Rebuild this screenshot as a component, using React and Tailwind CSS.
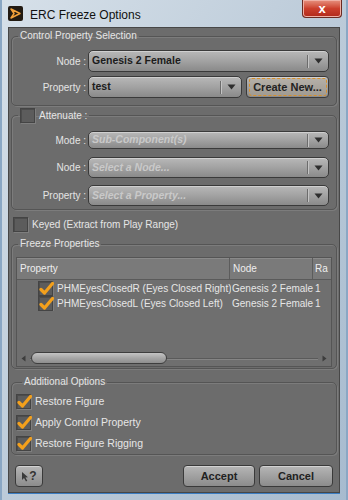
import React from "react";

const font = "font-['Liberation_Sans',Arial,sans-serif]";

function Arrow() {
  return (
    <svg width="9" height="6" viewBox="0 0 9 6">
      <path d="M0.5 0.5 L8.5 0.5 L4.5 5.5 Z" fill="#2e2e2e" />
    </svg>
  );
}

function Combo({ text, disabled, height }) {
  return (
    <div
      className={`flex items-center ${height} rounded-[5px] border border-[#3a3a3a] bg-linear-to-b from-[#b8b8b8] via-[#a2a2a2] to-[#8a8a8a] shadow-[inset_0_1px_0_#d0d0d0]`}
    >
      {disabled ? (
        <span className="flex-1 truncate pl-[3px] text-[10.5px] font-bold italic text-[#c9c9c9]">
          {text}
        </span>
      ) : (
        <span className="flex-1 truncate pl-[3px] text-[10.5px] font-bold text-[#1c1c1c]">
          {text}
        </span>
      )}
      <span className="h-[13px] w-px bg-[#6c6c6c] shadow-[1px_0_0_#c4c4c4]"></span>
      <span className="flex w-[20px] justify-center">
        <Arrow />
      </span>
    </div>
  );
}

function Check({ checked }) {
  return (
    <span className="relative flex h-[15px] w-[15px] shrink-0 items-center justify-center border border-[#444444] bg-[#5c5c5c] shadow-[inset_1px_1px_0_#4c4c4c,1px_1px_0_#7e7e7e]">
      {checked && (
        <svg width="15" height="15" viewBox="0 0 15 15" className="absolute left-[0px] top-[-1px]">
          <path
            d="M2 8.5 L5.5 12 L13.5 2.5"
            fill="none"
            stroke="#f3a01c"
            strokeWidth="3.2"
            strokeLinecap="round"
            strokeLinejoin="round"
          />
        </svg>
      )}
    </span>
  );
}

function Button({ children, width, focus }) {
  return (
    <div
      className={`flex h-[22px] ${width} items-center justify-center rounded-[4px] border border-[#3a3a3a] bg-linear-to-b from-[#b6b6b6] to-[#8c8c8c] shadow-[inset_0_1px_0_#d2d2d2] text-[11px] font-bold text-[#222222]`}
    >
      {focus ? (
        <span className="flex h-[18px] w-[78px] items-center justify-center rounded-[3px] border border-dashed border-[#d9902a] bg-[#b9ad98]/40">
          {children}
        </span>
      ) : (
        children
      )}
    </div>
  );
}

function Row({ label, children }) {
  return (
    <div className="flex items-center">
      <span className="w-[75px] pr-[1px] text-right text-[10px] text-[#e4e4e4]">{label}</span>
      <div className="ml-[1px] flex flex-1 gap-[4px]">{children}</div>
    </div>
  );
}

function Group({ legend, className, children }) {
  return (
    <fieldset
      className={`rounded-[5px] border border-[#555555] shadow-[inset_1px_1px_0_#7c7c7c,1px_1px_0_#7c7c7c] ${className}`}
    >
      <legend className="ml-[6px] px-[2px] text-[10px] leading-[12px] text-[#e6e6e6]">{legend}</legend>
      {children}
    </fieldset>
  );
}

function App() {
  return (
    <div
      className={`flex h-[500px] w-[348px] flex-col overflow-hidden border-l-2 border-r-2 border-[#8aa7c4] bg-linear-to-br from-[#d6e0e9] via-[#bccbd9] to-[#a7bbcf] ${font}`}
    >
      {/* title bar */}
      <div className="flex h-[27px] items-start">
        <div className="ml-[6px] mt-[6px] flex h-[15px] w-[15px] items-center justify-center rounded-[2px] bg-[#221a12]">
          <svg width="13" height="13" viewBox="0 0 13 13">
            <path d="M2 2 L11 6.5 L2 11 L5 6.5 Z" fill="none" stroke="#f3a13a" strokeWidth="1.5" strokeLinejoin="round" />
          </svg>
        </div>
        <span className="ml-[7px] mt-[6px] text-[12px] text-[#101010]">ERC Freeze Options</span>
        <div className="ml-auto mr-[4px] flex h-[18px] w-[40px] items-center justify-center rounded-b-[4px] border border-t-0 border-[#6b2a22] bg-linear-to-b from-[#e6907f] via-[#cc3f2c] to-[#b0281a] shadow-[inset_0_0_0_1px_#f0b0a5]">
          <span className="text-[13px] font-bold leading-none text-white">x</span>
        </div>
      </div>

      {/* client */}
      <div className="mx-[6px] mb-[7px] flex flex-1 flex-col border border-[#474747] bg-[#6c6c6c] px-[2px] text-[10px] text-[#e6e6e6] shadow-[0_1px_0_#3b7dc2]">
        <Group legend="Control Property Selection" className="mt-[2px] pb-[7px] pr-[7px] pt-[8px]">
          <div className="flex flex-col gap-[4px]">
            <Row label="Node :">
              <div className="flex-1">
                <Combo text="Genesis 2 Female" height="h-[22px]" />
              </div>
            </Row>
            <Row label="Property :">
              <div className="flex-1">
                <Combo text="test" height="h-[22px]" />
              </div>
              <Button width="w-[83px]" focus>
                Create New...
              </Button>
            </Row>
          </div>
        </Group>

        <Group
          legend={
            <span className="flex items-center gap-[4px]">
              <Check />
              <span>Attenuate :</span>
            </span>
          }
          className="mt-[2px] pb-[3px] pr-[7px] pt-[8px]"
        >
          <div className="flex flex-col">
            <Row label="Mode :">
              <div className="flex-1">
                <Combo text="Sub-Component(s)" height="h-[18px]" disabled />
              </div>
            </Row>
            <div className="mt-[8px]">
              <Row label="Node :">
                <div className="flex-1">
                  <Combo text="Select a Node..." height="h-[21px]" disabled />
                </div>
              </Row>
            </div>
            <div className="mt-[7px]">
              <Row label="Property :">
                <div className="flex-1">
                  <Combo text="Select a Property..." height="h-[21px]" disabled />
                </div>
              </Row>
            </div>
          </div>
        </Group>

        <div className="ml-[2px] mt-[7px] flex items-center gap-[4px]">
          <Check />
          <span>Keyed (Extract from Play Range)</span>
        </div>

        <Group legend="Freeze Properties" className="mt-[6px] pb-[1px] pt-[7px]">
          <div className="mx-[4px] flex h-[110px] flex-col border border-[#555555] bg-[#6f6f6f]">
            <div className="flex h-[22px] border-b border-[#5a5a5a] bg-[#7a7a7a] text-[#eeeeee] shadow-[inset_0_1px_0_#8a8a8a]">
              <span className="flex w-[213px] items-center border-r border-[#5c5c5c] pl-[3px]">Property</span>
              <span className="flex w-[83px] items-center border-r border-[#5c5c5c] pl-[3px]">Node</span>
              <span className="flex flex-1 items-center pl-[2px]">Ra</span>
            </div>
            {[
              "PHMEyesClosedR (Eyes Closed Right)",
              "PHMEyesClosedL (Eyes Closed Left)",
            ].map((name, i) => (
              <div key={i} className={`flex h-[15px] items-center whitespace-nowrap ${i === 0 ? "mt-[1px]" : ""}`}>
                <span className="flex w-[214px] items-center gap-[4px] overflow-hidden pl-[21px]">
                  <Check checked />
                  <span>{name}</span>
                </span>
                <span className="w-[83px] pl-[1px]">Genesis 2 Female</span>
                <span className="flex-1 pl-[1px]">1</span>
              </div>
            ))}
            <div className="flex-1"></div>
            <div className="mb-[2px] flex h-[12px] items-center px-[4px]">
              <svg width="5" height="7" viewBox="0 0 5 7">
                <path d="M4.5 0.5 L0.5 3.5 L4.5 6.5 Z" fill="#3c3c3c" />
              </svg>
              <div className="relative ml-[4px] flex h-[12px] flex-1 items-center">
                <div className="h-px w-full bg-[#5a5a5a] shadow-[0_1px_0_#858585]"></div>
                <div className="absolute left-[1px] top-0 h-[12px] w-[136px] rounded-full border border-[#3e3e3e] bg-linear-to-b from-[#c4c4c4] via-[#a6a6a6] to-[#8e8e8e]"></div>
              </div>
              <svg width="5" height="7" viewBox="0 0 5 7" className="ml-[4px]">
                <path d="M0.5 0.5 L4.5 3.5 L0.5 6.5 Z" fill="#3c3c3c" />
              </svg>
            </div>
          </div>
        </Group>

        <Group legend="Additional Options" className="mt-[7px] pb-[3px] pl-[4px] pt-[6px]">
          <div className="flex flex-col gap-[6px]">
            {["Restore Figure", "Apply Control Property", "Restore Figure Rigging"].map((t) => (
              <div key={t} className="flex h-[15px] items-center gap-[4px] text-[10.5px] leading-[15px]">
                <Check checked />
                <span>{t}</span>
              </div>
            ))}
          </div>
        </Group>

        <div className="ml-[4px] mr-[4px] mt-[10px] flex items-center">
          <div className="flex h-[22px] w-[28px] items-center justify-center rounded-[4px] border border-[#3a3a3a] bg-linear-to-b from-[#b6b6b6] to-[#8c8c8c] shadow-[inset_0_1px_0_#d2d2d2]">
            <svg width="8" height="11" viewBox="0 0 8 11">
              <path d="M1 1 L1 9 L3 7 L5 10.5 L6.3 9.8 L4.4 6.4 L7 6.2 Z" fill="#3a3a3a" />
            </svg>
            <span className="text-[12px] font-bold leading-none text-[#333333]">?</span>
          </div>
          <div className="ml-auto flex gap-[4px]">
            <Button width="w-[72px]">Accept</Button>
            <Button width="w-[74px]">Cancel</Button>
          </div>
        </div>
      </div>
    </div>
  );
}

export default App;
